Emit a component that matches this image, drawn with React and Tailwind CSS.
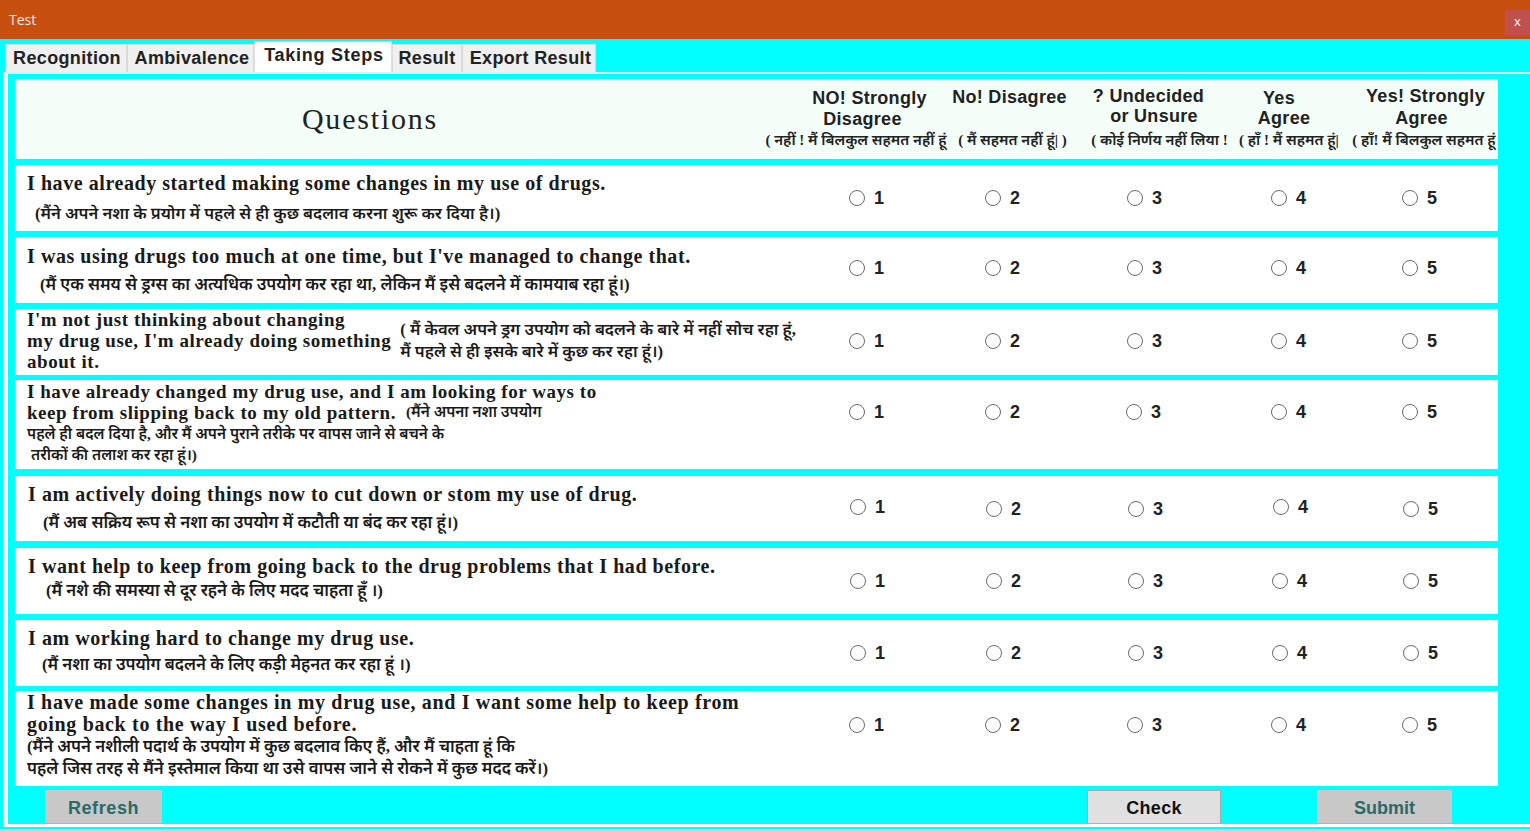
const serif = "font-['Liberation_Serif','Noto_Sans_Devanagari','Noto_Sans',serif]";
const sans = "font-['Liberation_Sans','Noto_Sans_Devanagari','Noto_Sans',sans-serif]";

function Radio({ n, cls = "" }) {
  return (
    <label className={`flex items-center gap-[9px] ${cls}`}>
      <span className="w-[16px] h-[16px] rounded-full border border-[#6b6b6b] bg-white shrink-0" />
      <span className={`${sans} font-bold text-[18px] leading-none text-[#222]`}>{n}</span>
    </label>
  );
}

function Row({ h, children, offsets = [] }) {
  return (
    <div className={`flex items-center bg-white shrink-0 ${h} w-[1483px]`}>
      <div className="w-[834px] shrink-0 self-stretch overflow-hidden">{children}</div>
      <div className="grid grid-cols-[136px_142px_144px_131px_1fr] items-center flex-1 min-w-0">
        {[1, 2, 3, 4, 5].map((n, i) => (
          <Radio key={n} n={n} cls={offsets[i] || ""} />
        ))}
      </div>
    </div>
  );
}

const En = ({ children, cls = "" }) => (
  <div className={`${serif} font-bold text-[20px] tracking-[0.56px] leading-[21px] text-[#1a1a1a] whitespace-nowrap ${cls}`}>{children}</div>
);
const EnS = ({ children, cls = "" }) => (
  <div className={`${serif} font-bold text-[19px] tracking-[0.55px] leading-[21px] text-[#1a1a1a] whitespace-nowrap ${cls}`}>{children}</div>
);
const Hi = ({ children, cls = "" }) => (
  <div className={`${serif} font-semibold text-[16.8px] leading-[22px] text-[#1a1a1a] whitespace-nowrap ${cls}`}>{children}</div>
);

function HeadCol({ w, lines, hi, hiCls = "", cls = "" }) {
  return (
    <div className={`${w} shrink-0 flex flex-col items-center ${cls}`}>
      <div className="h-[42px] flex flex-col items-center">
        {lines.map(([l, c]) => (
          <div key={l} className={`${sans} font-bold text-[18px] tracking-[0.3px] leading-[21px] text-[#222] whitespace-nowrap ${c}`}>{l}</div>
        ))}
      </div>
      <div className={`${serif} font-semibold text-[15px] leading-[20px] text-[#222] whitespace-nowrap mt-[2px] ${hiCls}`}>{hi}</div>
    </div>
  );
}

function Tab({ label, w, active }) {
  return (
    <div
      className={`${sans} ${w} font-bold text-center text-[#222] whitespace-nowrap border border-b-0 text-[18px] ${
        active
          ? "bg-white border-[#e0e0e0] h-[31px] leading-[26px] tracking-[0.75px]"
          : "bg-[#f0f0f0] border-[#dadada] h-[28px] leading-[26px] tracking-[0.35px]"
      }`}
    >
      {label}
    </div>
  );
}

export default function App() {
  return (
    <div className="w-[1530px] h-[832px] overflow-hidden bg-[#00ffff] flex flex-col relative">
      <div className="h-[39px] bg-[#c75011] shrink-0 flex items-center justify-between pl-[9px]">
        <span className="font-['Open_Sans',sans-serif] text-[14px] text-[#f2e8e0]">Test</span>
        <div className="w-[25px] h-[25px] bg-[#c0504d] text-white text-[13px] font-['Open_Sans',sans-serif] flex items-center justify-center mt-[5px]">x</div>
      </div>

      <div className="flex items-end pl-[5px] h-[32px] shrink-0 mt-[1px]">
        <Tab label="Recognition" w="w-[122px] pl-[2px]" />
        <Tab label="Ambivalence" w="w-[127px] pl-[3px]" />
        <Tab label="Taking Steps" w="w-[138px] pl-[2px]" active />
        <Tab label="Result" w="w-[70px]" />
        <Tab label="Export Result" w="w-[134px] pl-[3px]" />
      </div>

      <div className="ml-[3px] w-[1527px] h-[755px] border-t-[2px] border-l-[5px] border-b-[3px] border-white bg-[#00ffff] pl-[7px] pt-[5px] flex flex-col shrink-0 border-t-[#d8f4f4]">
        <div className="flex bg-[#f5fffa] h-[80px] w-[1483px] shrink-0 overflow-hidden">
          <div className="w-[750px] shrink-0 flex items-center justify-center pb-[1px]">
            <span className={`${serif} text-[30px] tracking-[1.8px] text-[#222] ml-[-40px]`}>Questions</span>
          </div>
          <div className="flex pt-[7px]">
            <HeadCol
              w="w-[185px]"
              lines={[["NO! Strongly", "ml-[24px] mt-[2px]"], ["Disagree", "ml-[10px]"]]}
              hi="( नहीं ! मैं बिलकुल सहमत नहीं हूं"
              hiCls="-ml-[3px]"
            />
            <HeadCol w="w-[125px]" lines={[["No! Disagree", "-ml-[6px] mt-[1px]"]]} hi="( मैं सहमत नहीं हूं| )" />
            <HeadCol
              w="w-[160px]"
              lines={[["? Undecided", "-ml-[13px]"], ["or Unsure", "-ml-[2px] -mt-[1px]"]]}
              hi="( कोई निर्णय नहीं लिया !"
              hiCls="ml-[9px]"
            />
            <HeadCol
              w="w-[108px]"
              lines={[["Yes", "-ml-[20px] mt-[2px]"], ["Agree", "-ml-[10px] -mt-[1px]"]]}
              hi="( हॉं ! मैं सहमत हूं|"
            />
            <HeadCol
              w="w-[160px]"
              lines={[["Yes! Strongly", "ml-[5px]"], ["Agree", "-ml-[3px] mt-[1px]"]]}
              hi="( हाँ! मैं बिलकुल सहमत हूं"
              hiCls="ml-[2px]"
            />
          </div>
        </div>

        <div className="h-[6px] shrink-0" />
        <Row h="h-[66px]">
          <En cls="pl-[12px] pt-[8px]">I have already started making some changes in my use of drugs.</En>
          <Hi cls="pl-[20px] pt-[9px] !text-[16.6px]">(मैंने अपने नशा के प्रयोग में पहले से ही कुछ बदलाव करना शुरू कर दिया है।)</Hi>
        </Row>
        <div className="h-[6px] shrink-0" />
        <Row h="h-[66px]" offsets={["mb-[4px]", "mb-[4px]", "mb-[4px]", "mb-[4px]", "mb-[4px]"]}>
          <En cls="pl-[12px] pt-[9px]">I was using drugs too much at one time, but I've managed to change that.</En>
          <Hi cls="pl-[25px] pt-[7px]">(मैं एक समय से ड्रग्स का अत्यधिक उपयोग कर रहा था, लेकिन मैं इसे बदलने में कामयाब रहा हूं।)</Hi>
        </Row>
        <div className="h-[6px] shrink-0" />
        <Row h="h-[66px]" offsets={["mb-[2px]", "mb-[2px]", "mb-[2px]", "mb-[2px]", "mb-[2px]"]}>
          <div className="flex pl-[12px]">
            <div>
              <EnS>I'm not just thinking about changing</EnS>
              <EnS>my drug use, I'm already doing something</EnS>
              <EnS>about it.</EnS>
            </div>
            <div className="pl-[9px] pt-[10px]">
              <Hi cls="!text-[16.6px]">( मैं केवल अपने ड्रग उपयोग को बदलने के बारे में नहीं सोच रहा हूं,</Hi>
              <Hi cls="!text-[16.6px]">मैं पहले से ही इसके बारे में कुछ कर रहा हूं।)</Hi>
            </div>
          </div>
        </Row>
        <div className="h-[5px] shrink-0" />
        <Row h="h-[89px] !items-start" offsets={["mt-[23px]", "mt-[23px]", "mt-[23px] -ml-[1px]", "mt-[23px]", "mt-[23px]"]}>
          <div className="pl-[12px] pt-[1px]">
            <EnS>I have already changed my drug use, and I am looking for ways to</EnS>
            <div className="flex items-center">
              <EnS>keep from slipping back to my old pattern.</EnS>
              <Hi cls="pl-[10px] !text-[15.3px] !leading-[21px] -mt-[2px]">(मैंने अपना नशा उपयोग</Hi>
            </div>
            <Hi cls="!text-[15.3px] !leading-[21px]">पहले ही बदल दिया है, और मैं अपने पुराने तरीके पर वापस जाने से बचने के</Hi>
            <Hi cls="pl-[4px] !text-[15.3px] !leading-[22px]">तरीकों की तलाश कर रहा हूं।)</Hi>
          </div>
        </Row>
        <div className="h-[7px] shrink-0" />
        <Row
          h="h-[65px]"
          offsets={["ml-[1px] mb-[4px]", "ml-[1px]", "ml-[1px]", "ml-[2px] mb-[4px]", "ml-[1px]"]}
        >
          <En cls="pl-[13px] pt-[8px]">I am actively doing things now to cut down or stom my use of drug.</En>
          <Hi cls="pl-[28px] pt-[7px]">(मैं अब सक्रिय रूप से नशा का उपयोग में कटौती या बंद कर रहा हूं।)</Hi>
        </Row>
        <div className="h-[7px] shrink-0" />
        <Row h="h-[66px]" offsets={["ml-[1px]", "ml-[1px]", "ml-[1px]", "ml-[1px]", "ml-[1px]"]}>
          <En cls="pl-[13px] pt-[8px]">I want help to keep from going back to the drug problems that I had before.</En>
          <Hi cls="pl-[31px] pt-[3px]">(मैं नशे की समस्या से दूर रहने के लिए मदद चाहता हूँ ।)</Hi>
        </Row>
        <div className="h-[6px] shrink-0" />
        <Row h="h-[66px]" offsets={["ml-[1px]", "ml-[1px]", "ml-[1px]", "ml-[1px]", "ml-[1px]"]}>
          <En cls="pl-[13px] pt-[8px]">I am working hard to change my drug use.</En>
          <Hi cls="pl-[27px] pt-[5px]">(मैं नशा का उपयोग बदलने के लिए कड़ी मेहनत कर रहा हूं ।)</Hi>
        </Row>
        <div className="h-[5px] shrink-0" />
        <Row h="h-[95px] !items-start" offsets={["mt-[25px]", "mt-[25px]", "mt-[25px]", "mt-[25px]", "mt-[25px]"]}>
          <div className="pl-[12px]">
            <En cls="!leading-[22px] !tracking-[0.66px]">I have made some changes in my drug use, and I want some help to keep from</En>
            <En cls="!leading-[22px] !tracking-[0.66px]">going back to the way I used before.</En>
            <Hi cls="pt-[1px]">(मैंने अपने नशीली पदार्थ के उपयोग में कुछ बदलाव किए हैं, और मैं चाहता हूं कि</Hi>
            <Hi>पहले जिस तरह से मैंने इस्तेमाल किया था उसे वापस जाने से रोकने में कुछ मदद करें।)</Hi>
          </div>
        </Row>

        <div className="flex items-start pt-[4px] h-[38px] shrink-0">
          <div className={`${sans} font-bold text-[18px] tracking-[0.6px] ml-[30px] w-[117px] h-[33px] pt-[3px] bg-[#c8c8c8] text-[#2a6a6a] flex items-center justify-center`}>Refresh</div>
          <div className={`${sans} font-bold text-[18px] tracking-[0.3px] ml-[925px] w-[134px] h-[33px] pt-[2px] bg-[#e0e0e0] border border-[#a8a8a8] border-b-0 text-[#111] flex items-center justify-center`}>Check</div>
          <div className={`${sans} font-bold text-[18px] ml-[96px] w-[135px] h-[33px] pt-[3px] bg-[#c8c8c8] text-[#2a6a6a] flex items-center justify-center`}>Submit</div>
        </div>
      </div>
      <div className="h-[2px] bg-[#00ffff] shrink-0" />
      <div className="flex-1 bg-[#c8d8d8]" />
    </div>
  );
}
